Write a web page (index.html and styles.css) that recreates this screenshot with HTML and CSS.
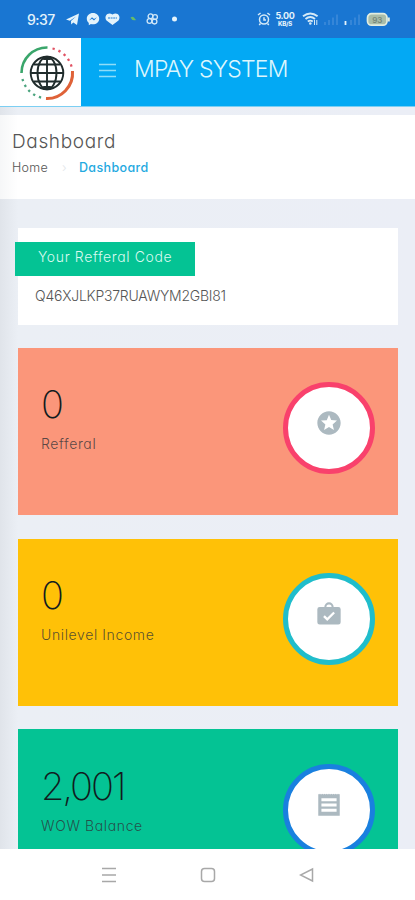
FILE: index.html
```
<!DOCTYPE html>
<html lang="en">
<head>
<meta charset="utf-8">
<title>MPAY System</title>
<link rel="stylesheet" href="styles.css">
</head>
<body>
<div class="phone">
  <div class="status">
    <span class="time">9:37</span>
    <svg class="status-left" width="120" height="16" viewBox="0 0 120 16" fill="#e4f3fb">
      <path d="M0 8.500 13 2.500 11 14 7.300 11.500 5.200 13.600 5 10 10 5.500 3.800 9.700Z"/>
      <path d="M27 2c-3.600 0-6.200 2.500-6.200 5.700 0 1.800.8 3.200 2 4.200v2.300l2.100-1.100c4.500 1 8.300-1.600 8.300-5.400C33.200 4.500 30.600 2 27 2Z"/>
      <path d="m23 9.500 3-3.200 2 1.700 3-1.700-3 3.200-2-1.700Z" fill="#1976d2"/>
      <path d="M46.500 14 40.500 9.500C37.500 5 42 .5 46.500 3.500 51 .5 55.500 5 52.500 9.500Z"/>
      <path d="M42 7h9" stroke="#82b8e8" stroke-width="2" stroke-dasharray="2 .6"/>
      <path d="M64.500 6.500q2-1.500 3.500 0l2 2.500q-4 1-5.500-2.500Z" fill="#66bb6a"/>
      <g fill="none" stroke="#d0e7f8" stroke-width="1.300"><circle cx="84.500" cy="5.300" r="2.400"/><circle cx="89" cy="6" r="2.400"/><circle cx="83.500" cy="10" r="2.400"/><circle cx="88.500" cy="10.600" r="2.400"/></g>
      <circle cx="108.500" cy="8" r="2.500"/>
    </svg>
    <svg class="alarm" width="14" height="14" viewBox="0 0 14 14" fill="none" stroke="#d5eaf7" stroke-width="1.500"><circle cx="7" cy="7.500" r="4.500"/><path d="M1 3 3.600 1M13 3 10.400 1M7 5.300V8H9M3.500 11.500 2.200 13M10.500 11.500 11.800 13"/></svg>
    <span class="speed"><b>5.00</b><small>KB/S</small></span>
    <svg class="signals" width="90" height="16" viewBox="0 0 90 16" fill="none">
      <g stroke="#d5eaf7" stroke-width="1.900"><path d="M1 5.300Q8.300-.5 15.600 5.300M3.500 8Q8.300 4 13 8M5.800 10.600Q8.300 8.700 10.800 10.600"/></g><circle cx="8.300" cy="12.500" r="1.300" fill="#d5eaf7"/><path d="M12.500 9v5M14.800 9v5" stroke="#d5eaf7"/>
      <g stroke="#3d8bda" stroke-width="1.600"><path d="M23 14v-3M27 14V9M31 14V6.500M35 14V3.500M49 14V9M53 14V6.500M57 14V3.500"/></g><path d="M43.500 14v-4" stroke="#e4f3fb" stroke-width="1.800"/>
      <rect x="65.500" y="2.700" width="19.500" height="11.500" rx="4" fill="#a9bda9" stroke="#e2eddf" stroke-width="1.700"/><path d="M86.800 6.500v4" stroke="#e2eddf" stroke-width="2"/><text x="75.300" y="11.500" class="battery">93</text>
    </svg>
  </div>

  <header class="header">
    <div class="logo">
      <svg width="56" height="56" viewBox="0 0 56 56" fill="none">
        <path d="M2.500 28A25.500 25.500 0 0 1 28.500 2.500" stroke="#3aa66b" stroke-width="2.600"/>
        <path d="M53.500 26A25.500 25.500 0 0 1 27 53.500" stroke="#df6238" stroke-width="3"/>
        <path d="M33.500 3.500A25.500 25.500 0 0 1 53 23.500" stroke="#e15263" stroke-width="2.300" stroke-dasharray="2.300 4"/>
        <path d="M3.500 34A25.500 25.500 0 0 0 24 53" stroke="#4ba47e" stroke-width="2.300" stroke-dasharray="2.300 4"/>
        <g stroke="#202c2c" stroke-width="1.900"><circle cx="28" cy="28" r="16.300"/><ellipse cx="28" cy="28" rx="9.500" ry="16.300"/><path d="M28 11.700v32.600M11.700 28h32.600M15 19.500h26M15 36.500h26"/></g>
        <path d="M22.500 12.800q5.500-2.500 11 0l-2 2.200h-7ZM22.500 43.200q5.500 2.500 11 0l-2-2.200h-7Z" fill="#202c2c"/>
      </svg>
    </div>
    <svg class="menu" width="17" height="15" viewBox="0 0 17 15" stroke="#8fddf8" stroke-width="1.700"><path d="M0 1.500h17M0 7.500h17M0 13.500h17"/></svg>
    <span class="brand">MPAY SYSTEM</span>
  </header>

  <main class="content">
    <section class="heading">
      <h1>Dashboard</h1>
      <nav class="crumbs"><span class="home">Home</span><span class="sep">›</span><span class="current">Dashboard</span></nav>
    </section>
    <section class="code-card">
      <div class="ribbon"><span>Your Refferal Code</span></div>
      <p class="code">Q46XJLKP37RUAWYM2GBI81</p>
    </section>
    <section class="stat coral">
      <div><div class="number">0</div><div class="label">Refferal</div></div>
      <div class="ring"><svg width="28" height="28" viewBox="0 0 24 24"><path d="M11.990 2C6.470 2 2 6.480 2 12s4.470 10 9.990 10C17.520 22 22 17.520 22 12S17.520 2 11.990 2zm4.240 16L12 15.450 7.770 18l1.120-4.810-3.730-3.230 4.920-.42L12 5l1.920 4.530 4.920.42-3.730 3.230L16.230 18z"/></svg></div>
    </section>
    <section class="stat amber">
      <div><div class="number">0</div><div class="label">Unilevel Income</div></div>
      <div class="ring"><svg width="28" height="28" viewBox="0 0 24 24"><path fill-rule="evenodd" d="M20 6h-4a4 4 0 0 0-8 0H4a2 2 0 0 0-2 2v11a2 2 0 0 0 2 2h16a2 2 0 0 0 2-2V8a2 2 0 0 0-2-2ZM12 3.800A2.100 2.100 0 0 1 14.200 6H9.800A2.100 2.100 0 0 1 12 3.800ZM10.500 18 7 14.500l1.400-1.400 2.100 2.100 5.200-5.200 1.400 1.400Z"/></svg></div>
    </section>
    <section class="stat green">
      <div><div class="number balance">2,001</div><div class="label">WOW Balance</div></div>
      <div class="ring"><svg width="28" height="28" viewBox="0 0 24 24"><path fill-rule="evenodd" d="M2.800 3 3.500 2.300 4.300 3 5.100 2.300 5.800 3 6.600 2.300 7.400 3 8.200 2.300 8.900 3 9.700 2.300 10.500 3 11.300 2.300 12 3 12.800 2.300 13.500 3 14.300 2.300 15.100 3 15.900 2.300 16.600 3 17.400 2.300 18.200 3 18.900 2.300 19.700 3 20.500 2.300 21.200 3V21.300H2.800ZM5.500 6.300h13v2.400h-13ZM5.500 10.800h13v2.400h-13ZM5.500 15.300h13v2.400h-13Z"/></svg></div>
    </section>
  </main>

  <footer class="nav">
    <svg width="14" height="16" viewBox="0 0 14 16"><path d="M0 1.500h14M0 8h14M0 14.500h14"/></svg>
    <svg width="16" height="16" viewBox="0 0 16 16"><rect x="1.500" y="1.500" width="13" height="13" rx="3"/></svg>
    <svg width="16" height="16" viewBox="0 0 16 16"><path d="M13.500 2v12L1.500 8Z"/></svg>
  </footer>
</div>
</body>
</html>
```

FILE: styles.css
```
* { box-sizing: border-box; }
body { margin: 0; font-family: Inter, "Liberation Sans", sans-serif; font-feature-settings: "cv11"; font-weight: 300; color: #555; }
svg { display: block; flex: none; }
.phone { width: 415px; height: 900px; display: flex; flex-direction: column; overflow: hidden; background: #fff; white-space: nowrap; }
.status { height: 38px; flex: none; display: flex; align-items: center; padding-left: 27px; background: #1976d2; color: #e4f3fb; }
.time { width: 39px; font-size: 14px; font-weight: 500; letter-spacing: -.5px; }
.alarm { margin-left: 71px; }
.speed { width: 20px; margin: 0 7px 0 4px; display: flex; flex-direction: column; align-items: center; }
.speed b { font-size: 9px; line-height: 9px; font-weight: 700; letter-spacing: -.3px; }
.speed small { font-size: 6px; line-height: 7px; font-weight: 800; letter-spacing: -.2px; }
.battery { font-size: 8px; font-weight: 600; fill: #75877a; text-anchor: middle; }
.header { height: 69px; flex: none; display: flex; background: #03a9f4; border-bottom: 1px solid #7ccff3; }
.logo { width: 81px; background: #fff; padding: 7px 0 0 19px; }
.menu { margin: 25px 0 0 18px; }
.brand { margin: 16px 0 0 18px; font-size: 23px; line-height: 30px; color: #dcf6fd; letter-spacing: -.8px; }
.content { height: 742px; flex: none; overflow: hidden; padding-top: 8px; background: linear-gradient(90deg, #e0e4ea, #ebeff5 18px, #ebeef6); }
.heading { height: 84px; padding: 15px 12px 0; background: linear-gradient(90deg, #f6f7f8, #fff 18px); }
h1 { margin: 0; font-size: 19px; font-weight: 300; line-height: 24px; letter-spacing: .65px; }
.crumbs { display: flex; align-items: center; margin-top: 5px; font-size: 12.500px; line-height: 18px; letter-spacing: .35px; }
.home { width: 50px; }
.sep { width: 17px; color: #e2e6e9; }
.current { color: #24a9df; font-weight: 500; }
.code-card { width: 380px; height: 97px; margin: 29px 0 23px 18px; padding-top: 14px; background: #fff; }
.ribbon { width: 180px; height: 34px; margin-left: -3px; padding: 5px 0 0 23px; background: #04c394; color: #d9faef; font-size: 14px; line-height: 20px; letter-spacing: .62px; }
.code { margin: 10px 0 0 17px; font-size: 14px; line-height: 20px; letter-spacing: -.23px; }
.stat { width: 380px; height: 167px; margin: 0 0 24px 18px; padding: 34px 23px 0; display: flex; justify-content: space-between; }
.coral { background: #fb967a; }
.amber { background: #ffc107; margin-bottom: 23px; }
.green { background: #04c394; padding-top: 35px; }
.number { height: 46px; font-size: 38px; font-weight: 200; line-height: 44px; color: #111c20; }
.balance { letter-spacing: -2px; }
.label { margin-top: 6px; font-size: 14px; line-height: 20px; letter-spacing: .62px; color: rgba(45,50,55,.8); }
.ring { width: 92px; height: 92px; border: 5.500px solid #f9416c; border-radius: 50%; background: #fff; display: flex; justify-content: center; padding-top: 22px; }
.amber .ring { border-color: #20bdcb; }
.green .ring { border-color: #1980df; }
.ring svg { fill: #acb9c0; }
.nav { height: 51px; display: flex; align-items: center; justify-content: space-between; padding: 0 100px 0 102px; background: #fff; }
.nav svg { fill: none; stroke: #a8a8a8; stroke-width: 1.500; }
```
